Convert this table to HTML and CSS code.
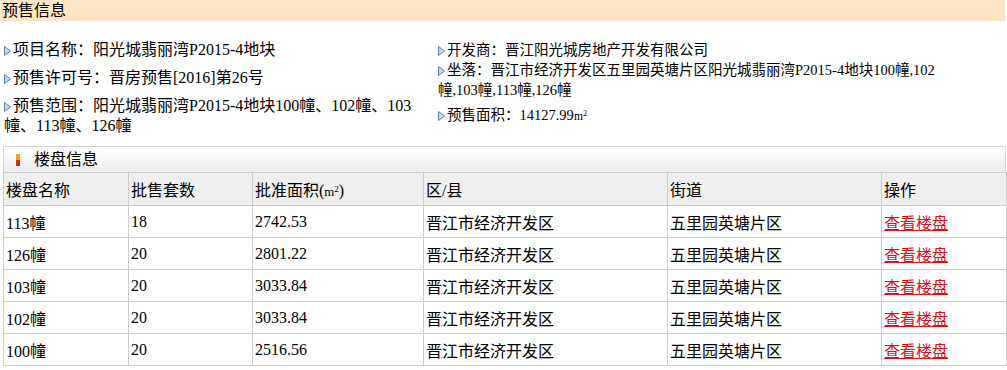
FILE: index.html
```html
<!DOCTYPE html>
<html lang="zh-CN">
<head>
<meta charset="utf-8">
<title>预售信息</title>
<link rel="stylesheet" href="styles.css">
</head>
<body>
<div class="page">
  <h2 class="section-title">预售信息</h2>
  <div class="info">
    <div class="info-col left">
      <p class="item"><svg class="arrow" width="7" height="10" viewBox="0 0 7 10"><polygon points="0.5,0.5 6.5,5 0.5,9.5" fill="#c5d8ef" stroke="#5b80b2" stroke-width="1"/></svg>项目名称：阳光城翡丽湾P2015-4地块</p>
      <p class="item"><svg class="arrow" width="7" height="10" viewBox="0 0 7 10"><polygon points="0.5,0.5 6.5,5 0.5,9.5" fill="#c5d8ef" stroke="#5b80b2" stroke-width="1"/></svg>预售许可号：晋房预售[2016]第26号</p>
      <p class="item"><svg class="arrow" width="7" height="10" viewBox="0 0 7 10"><polygon points="0.5,0.5 6.5,5 0.5,9.5" fill="#c5d8ef" stroke="#5b80b2" stroke-width="1"/></svg>预售范围：阳光城翡丽湾P2015-4地块100幢、102幢、103幢、113幢、126幢</p>
    </div>
    <div class="info-col right">
      <p class="item tight"><svg class="arrow" width="7" height="10" viewBox="0 0 7 10"><polygon points="0.5,0.5 6.5,5 0.5,9.5" fill="#c5d8ef" stroke="#5b80b2" stroke-width="1"/></svg>开发商：晋江阳光城房地产开发有限公司</p>
      <p class="item tight"><svg class="arrow" width="7" height="10" viewBox="0 0 7 10"><polygon points="0.5,0.5 6.5,5 0.5,9.5" fill="#c5d8ef" stroke="#5b80b2" stroke-width="1"/></svg>坐落：晋江市经济开发区五里园英塘片区阳光城翡丽湾P2015-4地块100幢,102幢,103幢,113幢,126幢</p>
      <p class="item spaced"><svg class="arrow" width="7" height="10" viewBox="0 0 7 10"><polygon points="0.5,0.5 6.5,5 0.5,9.5" fill="#c5d8ef" stroke="#5b80b2" stroke-width="1"/></svg>预售面积：14127.99<span class="m2">m<sup>2</sup></span></p>
    </div>
  </div>

  <div class="panel">
    <div class="panel-title"><span class="mark"></span>楼盘信息</div>
    <table class="grid">
      <colgroup>
        <col class="c1"><col class="c2"><col class="c3"><col class="c4"><col class="c5"><col class="c6">
      </colgroup>
      <thead>
        <tr><th>楼盘名称</th><th>批售套数</th><th>批准面积(<span class="m2">m<sup>2</sup></span>)</th><th>区/县</th><th>街道</th><th>操作</th></tr>
      </thead>
      <tbody>
        <tr><td>113幢</td><td>18</td><td>2742.53</td><td>晋江市经济开发区</td><td>五里园英塘片区</td><td><a href="#">查看楼盘</a></td></tr>
        <tr><td>126幢</td><td>20</td><td>2801.22</td><td>晋江市经济开发区</td><td>五里园英塘片区</td><td><a href="#">查看楼盘</a></td></tr>
        <tr><td>103幢</td><td>20</td><td>3033.84</td><td>晋江市经济开发区</td><td>五里园英塘片区</td><td><a href="#">查看楼盘</a></td></tr>
        <tr><td>102幢</td><td>20</td><td>3033.84</td><td>晋江市经济开发区</td><td>五里园英塘片区</td><td><a href="#">查看楼盘</a></td></tr>
        <tr><td>100幢</td><td>20</td><td>2516.56</td><td>晋江市经济开发区</td><td>五里园英塘片区</td><td><a href="#">查看楼盘</a></td></tr>
      </tbody>
    </table>
  </div>
</div>
</body>
</html>
```

FILE: styles.css
```css
html, body {
  margin: 0;
  padding: 0;
  background: #fff;
}
body {
  font-family: "Liberation Serif", "Noto Sans CJK SC", serif;
  font-size: 16px;
  color: #000;
}
.page {
  width: 1007px;
}
.section-title {
  margin: 0;
  width: 1005px;
  height: 21px;
  line-height: 21px;
  padding-left: 2px;
  box-sizing: border-box;
  background: #fde5c5;
  font-size: 16px;
  font-weight: normal;
}
.info {
  display: flex;
  padding: 19px 0 0 4px;
}
.info-col.left {
  width: 418px;
}
.info-col.right {
  margin-left: 16px;
  width: 510px;
  font-size: 14.5px;
}
.item {
  margin: 0 0 8px 0;
  line-height: 20px;
}
.item.tight {
  margin: 0;
}
.item.spaced {
  margin-top: 5px;
}
.arrow {
  display: inline-block;
  vertical-align: -1px;
  margin-right: 2px;
}
.m2 {
  font-size: 0.8em;
}
.m2 sup {
  font-size: 0.7em;
  vertical-align: 0.5em;
  line-height: 0;
}
.panel {
  margin: 2px 0 0 3px;
  width: 1003px;
}
.panel-title {
  height: 25px;
  line-height: 25px;
  border: 1px solid #d4d4d4;
  border-bottom: none;
  border-radius: 2px 2px 0 0;
  background: linear-gradient(#ffffff, #ececec);
  padding-left: 12px;
  display: flex;
  align-items: center;
}
.mark {
  display: inline-block;
  width: 4px;
  height: 12px;
  margin-right: 14px;
  background: linear-gradient(#f7a21b 0%, #f7a21b 45%, #d9251d 55%, #d9251d 100%);
}
.grid {
  width: 1003px;
  border-collapse: collapse;
  table-layout: fixed;
}
.c1 { width: 125px; }
.c2 { width: 124px; }
.c3 { width: 171px; }
.c4 { width: 244px; }
.c5 { width: 214px; }
.c6 { width: 125px; }
.grid th,
.grid td {
  border: 1px solid #cccccc;
  padding: 0 2px;
  text-align: left;
  font-weight: normal;
  height: 31px;
  white-space: nowrap;
}
.grid th {
  background: #efefef;
  height: 32px;
}
.grid a {
  color: #d8141b;
  text-decoration: underline;
}
```
